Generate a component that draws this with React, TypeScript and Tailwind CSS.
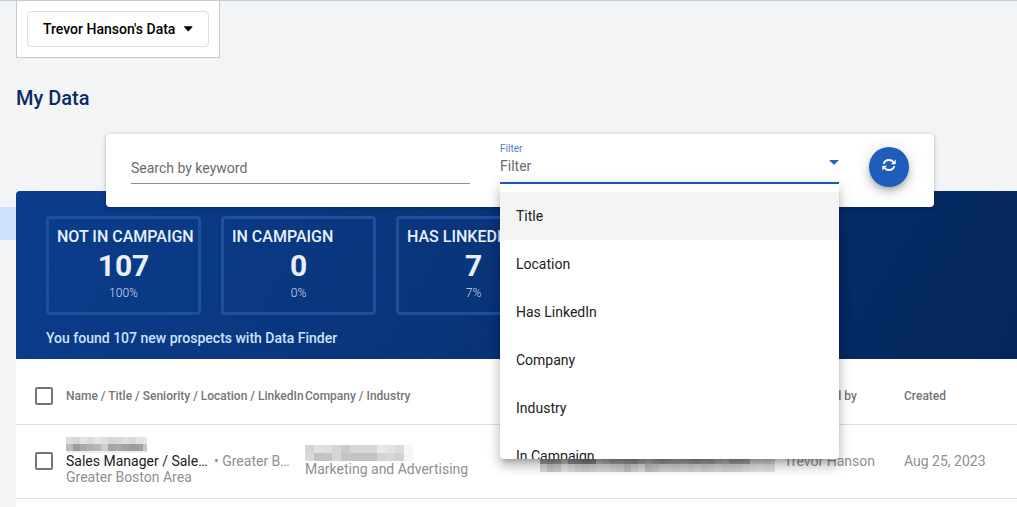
const filters = ["Title", "Location", "Has LinkedIn", "Company", "Industry", "In Campaign"];

const stats = [
  { label: "NOT IN CAMPAIGN", value: "107", percent: "100%" },
  { label: "IN CAMPAIGN", value: "0", percent: "0%" },
  { label: "HAS LINKEDIN", value: "7", percent: "7%" },
];

const nameShades = [
  ["#dddddd", "#d6d6d6", "#e2e2e2", "#dcdcdc", "#e4e4e4", "#dddddd", "#d5d5d5", "#d9d9d9", "#e0e0e0", "#d9d9d9", "#e3e3e3", "#e6e6e6"],
  ["#bcbcbc", "#9b9b9b", "#a9a9a9", "#b1b1b1", "#b7b7b7", "#cfcfcf", "#a5a5a5", "#a9a9a9", "#a3a3a3", "#9c9c9c", "#a0a0a0", "#c6c6c6"],
];
const companyShades = [
  ["#d6d6d6", "#e1e1e1", "#dedede", "#d6d6d6", "#cbcbcb", "#d7d7d7", "#d6d6d6", "#d6d6d6", "#e7e7e7", "#e2e2e2", "#dcdcdc", "#f5f5f5"],
  ["#dadada", "#c2c2c2", "#c4c4c4", "#d6d6d6", "#c4c4c4", "#c3c3c3", "#c3c3c3", "#c3c3c3", "#d4d4d4", "#d6d6d6", "#d0d0d0", "#f5f5f5"],
];
const emailShades = [
  ["#999999", "#8e8e8e", "#989898", "#b8b8b8", "#8c8c8c", "#858585", "#7d7d7d", "#808080", "#b2b2b2", "#a8a8a8", "#999999", "#989898", "#949494", "#8e8e8e", "#9f9f9f", "#aaaaaa", "#9b9b9b", "#959595", "#9a9a9a", "#a1a1a1", "#a0a0a0", "#999999", "#949494", "#9c9c9c", "#979797", "#aaaaaa", "#b0b0b0", "#9a9a9a", "#9c9c9c", "#a1a1a1", "#d2d2d2", "#d3d3d3", "#cfcfcf", "#d6d6d6"],
  ["#d8d8d8", "#c4c4c4", "#cacaca", "#e3e3e3", "#dadada", "#d0d0d0", "#cbcbcb", "#d0d0d0", "#d6d6d6", "#d6d6d6", "#d0d0d0", "#cccccc", "#bcbcbc", "#cdcdcd", "#d9d9d9", "#bebebe", "#c5c5c5", "#d0d0d0", "#d2d2d2", "#cecece", "#d0d0d0", "#cccccc", "#d2d2d2", "#cbcbcb", "#d0d0d0", "#d5d5d5", "#cecece", "#d0d0d0", "#d6d6d6", "#dcdcdc", "#e1e1e1", "#e3e3e3", "#e0e0e0", "#e3e3e3"],
];

function Redacted({ shades, cell, row: rowHeight, width }: { shades: string[][]; cell: number; row: number; width: number }) {
  return (
    <svg width={width} height={16} viewBox={`0 0 ${width} 16`} shapeRendering="crispEdges" className="block" aria-hidden="true">
      {shades.map((row, y) =>
        row.map((fill, x) => (
          <rect key={`${x}-${y}`} x={x * cell} y={y * rowHeight} width={cell} height={rowHeight} fill={fill} />
        )),
      )}
      <rect y={rowHeight * 2} width={width} height={2} fill="#efefef" />
    </svg>
  );
}

function Tick({ label }: { label: string }) {
  return (
    <input
      type="checkbox"
      aria-label={label}
      className="ml-[19px] block size-[18px] appearance-none rounded-xs border-2 border-[#757575] bg-white"
    />
  );
}

function RefreshIcon() {
  return (
    <svg width="14" height="12" viewBox="0 0 14 12" fill="none" stroke="#fff" strokeWidth="1.800" aria-hidden="true">
      <path d="M1.700 5C2.300 2.600 4.400 1 7 1c1.700 0 3.300.7 4.400 1.900" />
      <path d="M12.300 7c-.6 2.400-2.700 4-5.300 4-1.700 0-3.300-.7-4.400-1.900" />
      <path d="M13.700.4v4.800H8.900zM.3 11.600V6.800h4.800z" fill="#fff" stroke="none" />
    </svg>
  );
}

function SearchCard() {
  return (
    <form className="relative z-10 mr-[83px] -mb-4 ml-[90px] flex h-[73px] gap-[30px] rounded bg-white px-[25px] shadow-[0_1px_4px_rgba(0,0,0,0.3)]">
      <div className="flex-1 pt-5">
        <input
          type="search"
          aria-label="Search by keyword"
          placeholder="Search by keyword"
          className="h-[30px] w-full border-b border-[#8f8f8f] pb-0.5 text-sm text-[#333] outline-none placeholder:text-[#6b6b6b]"
        />
      </div>
      <div className="relative flex-1 pt-2">
        <label htmlFor="filter" className="block h-3 text-[10px] leading-[14px] text-[#4a80cc]">
          Filter
        </label>
        <select
          id="filter"
          className="block h-[30px] w-full appearance-none border-b-2 border-[#1e5dbc] pb-1 text-sm leading-5 text-[#6b6b6b] outline-none"
        >
          <option>Filter</option>
        </select>
        <svg width="10" height="5" viewBox="0 0 10 5" className="pointer-events-none absolute top-[26px] right-0" aria-hidden="true">
          <path d="M0 0h10L5 5z" fill="#2a68c0" />
        </svg>
        <ul
          role="listbox"
          aria-label="Filter"
          className="absolute top-[50px] left-0 h-[275px] w-full overflow-hidden rounded-b bg-white pt-2 shadow-[0_5px_5px_-3px_rgba(0,0,0,0.2),0_8px_10px_1px_rgba(0,0,0,0.14),0_3px_14px_2px_rgba(0,0,0,0.12)]"
        >
          {filters.map((name, i) => (
            <li
              key={name}
              role="option"
              aria-selected={i === 0}
              className="flex h-12 items-center px-4 text-sm text-[#212121] aria-selected:bg-[#f4f4f4]"
            >
              {name}
            </li>
          ))}
        </ul>
      </div>
      <button
        type="button"
        aria-label="Refresh"
        className="mt-[13px] flex size-10 items-center justify-center rounded-full bg-[#1e5dbc] pb-1 text-white shadow-[0_3px_5px_-1px_rgba(0,0,0,0.2),0_6px_10px_rgba(0,0,0,0.14),0_1px_18px_rgba(0,0,0,0.12)]"
      >
        <RefreshIcon />
      </button>
    </form>
  );
}

function Banner() {
  return (
    <section className="flex h-[168px] flex-col rounded-tl bg-linear-[120deg,#0b3d8c,#09357a_45%,#052c68_75%,#05265a] px-[30px] pt-[25px]">
      <div className="flex gap-5">
        {stats.map((s) => (
          <div
            key={s.label}
            className="flex h-[99px] w-[155px] shrink-0 flex-col rounded border-3 border-[#1d509d] px-2 pt-2 text-[#e8f0fc]"
          >
            <h2 className="text-base leading-5 font-medium whitespace-nowrap">{s.label}</h2>
            <p className="text-center text-[30px] leading-[38px] font-bold">{s.value}</p>
            <p className="text-center text-xs leading-4 font-light text-[#d2def2]">{s.percent}</p>
          </div>
        ))}
      </div>
      <p className="mt-[13px] text-sm leading-5 font-medium text-[#cfe1fc]">You found 107 new prospects with Data Finder</p>
    </section>
  );
}

function Prospects() {
  return (
    <table className="w-full table-fixed border-collapse text-left">
      <colgroup>
        <col className="w-[50px]" />
        <col className="w-[239px]" />
        <col className="w-[235px]" />
        <col className="w-[244px]" />
        <col className="w-[120px]" />
        <col />
      </colgroup>
      <thead>
        <tr className="h-[65px] border-b border-[#dedede] text-xs whitespace-nowrap text-[#757575] [&>th]:p-0 [&>th]:pt-2.5 [&>th]:font-medium">
          <th><Tick label="Select all" /></th>
          <th>Name / Title / Seniority / Location / LinkedIn</th>
          <th>Company / Industry</th>
          <th>Email</th>
          <th>Purchased by</th>
          <th>Created</th>
        </tr>
      </thead>
      <tbody>
        <tr className="h-[74px] border-b border-[#dedede] text-sm leading-4 whitespace-nowrap text-[#8f8f8f] [&>td]:p-0">
          <td><Tick label="Select Sales Manager" /></td>
          <td>
            <Redacted shades={nameShades} cell={7} row={7} width={81} />
            <div className="flex">
              <span className="w-[142px] truncate text-[#212121]">Sales Manager / Sales Executive</span>
              <span className="ml-1.5 w-[77px] truncate">• Greater Boston Area</span>
            </div>
            <div>Greater Boston Area</div>
          </td>
          <td>
            <Redacted shades={companyShades} cell={9} row={8} width={108} />
            <div>Marketing and Advertising</div>
          </td>
          <td>
            <div className="pt-1.5">
              <Redacted shades={emailShades} cell={7} row={8} width={235} />
            </div>
          </td>
          <td>Trevor Hanson</td>
          <td>Aug 25, 2023</td>
        </tr>
      </tbody>
    </table>
  );
}

export default function App() {
  return (
    <div className="flex min-h-screen overflow-hidden border-t border-[#c3cbd6] bg-[#f3f4f6] font-['Roboto',sans-serif]">
      <nav className="w-4 shrink-0 pt-[206px]">
        <a href="#my-data" aria-label="My Data" className="block h-[33px] bg-[#cfe1fd]" />
      </nav>
      <main className="flex min-w-0 flex-1 flex-col">
        <div className="self-start border border-t-0 border-[#c9c9c9] bg-white p-2.5">
          <button
            type="button"
            className="flex h-9 w-[182px] items-center gap-[9px] rounded border border-[#dedede] px-[15px] text-sm font-medium whitespace-nowrap text-black"
          >
            Trevor Hanson's Data
            <svg width="9" height="6" viewBox="0 0 9 6" aria-hidden="true">
              <path d="M.6 0h7.800c.6 0 .8.6.4 1L5.100 5.200a.8.8 0 0 1-1.200 0L.2 1C-.2.6 0 0 .6 0z" fill="#000" />
            </svg>
          </button>
        </div>
        <h1 className="mt-[26px] mb-[22px] text-xl leading-7 font-medium text-[#0a2c63]">My Data</h1>
        <SearchCard />
        <Banner />
        <div className="flex-1 bg-white">
          <Prospects />
        </div>
      </main>
    </div>
  );
}
